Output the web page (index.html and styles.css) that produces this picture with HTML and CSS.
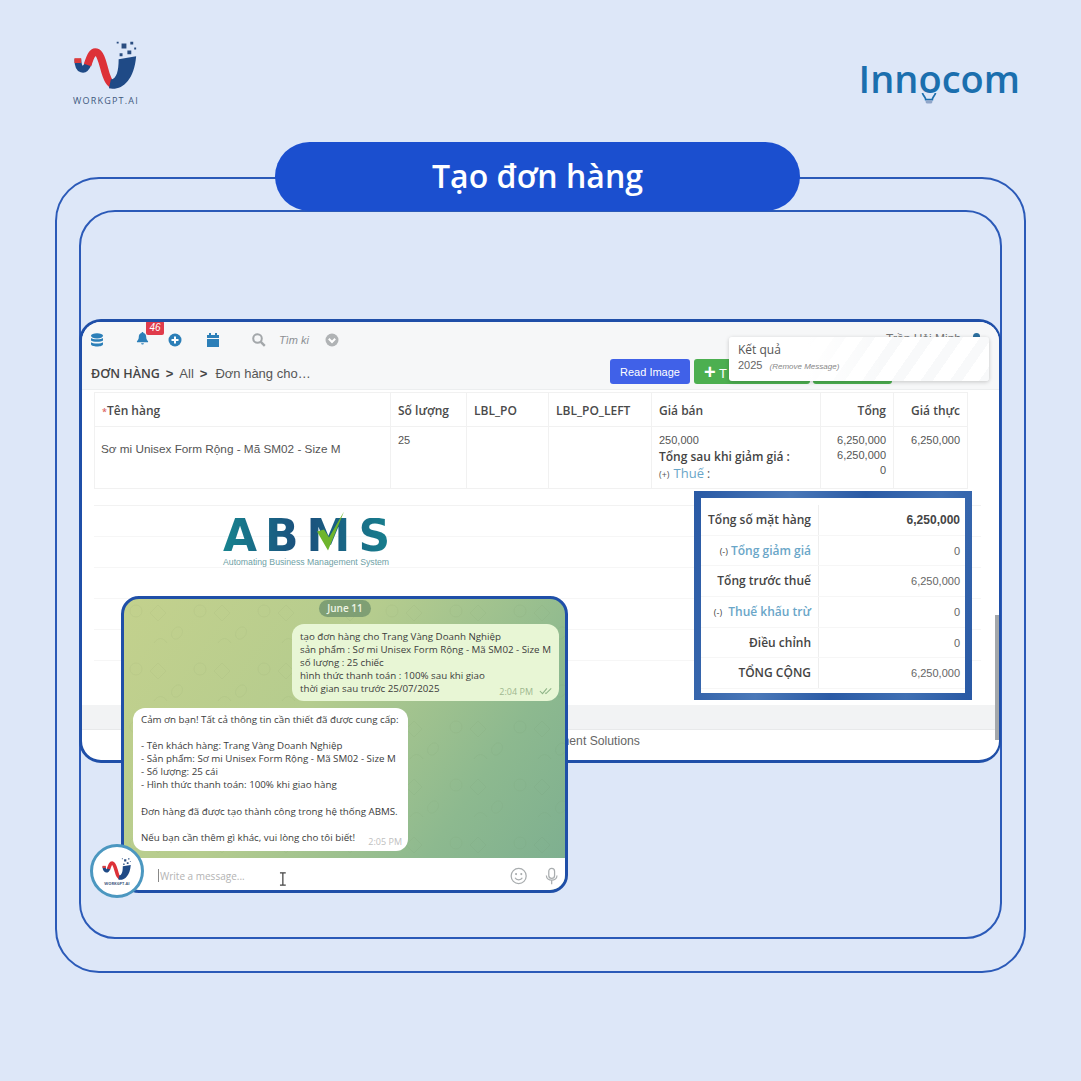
FILE: index.html
```html
<!DOCTYPE html>
<html lang="vi">
<head>
    <meta charset="UTF-8">
    <meta name="viewport" content="width=device-width, initial-scale=1.0">
    <title>Tạo đơn hàng</title>
    <link rel="stylesheet" href="styles.css">
</head>
<body>
    <div class="poster">
        <header class="top">
            <div class="workgpt">
                <svg class="workgpt-mark" viewBox="70 35 72 56">
                    <use href="#wave"></use>
                </svg>
                <span class="workgpt-name">WORKGPT.AI</span>
            </div>
            <div class="innocom">
                <span class="innocom-name">Innocom</span>
                <svg class="innocom-bulb" viewBox="0 0 16 10">
                    <path d="M2 0c1 3 3 4 3 6h6c0-2 2-3 3-6" fill="none" stroke="#1b6fae" stroke-width="1.6"/>
                    <rect x="5" y="6.5" width="6" height="3" rx="1" fill="#8fa6c9"/>
                </svg>
            </div>
        </header>

        <h1 class="pill">Tạo đơn hàng</h1>

        <div class="frame-outer">
            <div class="frame-inner">
                <section class="app">
                    <div class="toolbar">
                        <div class="tool-row">
                            <svg class="ico ico-db" viewBox="0 0 14 14"><ellipse cx="7" cy="2.8" rx="6" ry="2.6"/><path d="M1 5c1.500 1.800 10.500 1.800 12 0v2.400c-1.500 1.800-10.500 1.800-12 0zM1 9.200c1.500 1.800 10.500 1.800 12 0v2c0 3-12 3-12 0z"/></svg>
                            <span class="bell-wrap">
                                <svg class="ico ico-bell" viewBox="0 0 14 14"><path d="M7 0c.7 0 1 .5 1 1 2.300.5 3 2.500 3 4.500 0 2.500 1 3.500 2 4.500v1H1v-1c1-1 2-2 2-4.500C3 3.500 3.700 1.500 6 1c0-.5.300-1 1-1zM5.500 12h3a1.500 1.500 0 0 1-3 0z"/></svg>
                                <span class="badge">46</span>
                            </span>
                            <svg class="ico ico-plus" viewBox="0 0 14 14"><circle cx="7" cy="7" r="6.500"/><path d="M3.500 6h7v2h-7zM6 3.500h2v7H6z" fill="#fff"/></svg>
                            <svg class="ico ico-cal" viewBox="0 0 14 14"><path d="M3 0h2v2h4V0h2v2h2v3H1V2h2zM1 6h12v8H1z"/></svg>
                            <svg class="ico-search" viewBox="0 0 14 14"><circle cx="5.500" cy="5.500" r="4.300" fill="none" stroke="#a3a7aa" stroke-width="2"/><path d="M8.800 8.800l4 4" stroke="#a3a7aa" stroke-width="2.400"/></svg>
                            <span class="search-text">Tìm ki</span>
                            <svg class="ico-chev" viewBox="0 0 14 14"><circle cx="7" cy="7" r="6.500" fill="#b0b3b5"/><path d="M3.800 5.800L7 9l3.200-3.200" fill="none" stroke="#fff" stroke-width="2"/></svg>
                            <span class="user-name">Trần Hải Minh</span>
                            <span class="user-dot"></span>
                        </div>
                        <div class="tool-row crumb-row">
                            <nav class="crumbs">
                                <span class="crumb-main">ĐƠN HÀNG</span>
                                <span class="crumb-sep">&gt;</span>
                                <span>All</span>
                                <span class="crumb-sep">&gt;</span>
                                <span class="crumb-last">Đơn hàng cho…</span>
                            </nav>
                            <div class="actions">
                                <button class="btn btn-read">Read Image</button>
                                <button class="btn btn-green btn-new"><b>+</b> T</button>
                                <button class="btn btn-green btn-save"></button>
                            </div>
                        </div>
                    </div>

                    <div class="app-body">
                        <table class="items">
                            <thead>
                                <tr>
                                    <th class="col-name"><i>*</i>Tên hàng</th>
                                    <th class="col-qty">Số lượng</th>
                                    <th class="col-po">LBL_PO</th>
                                    <th class="col-left">LBL_PO_LEFT</th>
                                    <th class="col-price">Giá bán</th>
                                    <th class="col-sum num">Tổng</th>
                                    <th class="col-real num">Giá thực</th>
                                </tr>
                            </thead>
                            <tbody>
                                <tr>
                                    <td class="item-name">Sơ mi Unisex Form Rộng - Mã SM02 - Size M</td>
                                    <td>25</td>
                                    <td></td>
                                    <td></td>
                                    <td>250,000
                                        <div class="after-disc">Tổng sau khi giảm giá :</div>
                                        <div class="tax-line"><small>(+)</small> <a>Thuế</a> :</div>
                                    </td>
                                    <td class="num">6,250,000<br>6,250,000<br>0</td>
                                    <td class="num">6,250,000</td>
                                </tr>
                            </tbody>
                        </table>

                        <div class="summary">
                            <div class="abms">
                                <span class="abms-name">ABMS</span>
                                <svg class="abms-check" viewBox="0 0 30 40"><path d="M1 20l7-2 5 8L28 0 12 39z" fill="#6fb52c"/></svg>
                                <span class="abms-sub">Automating Business Management System</span>
                            </div>
                            <div class="totals">
                                <div class="total-row"><span class="total-label">Tổng số mặt hàng</span><span class="total-val strong">6,250,000</span></div>
                                <div class="total-row"><span class="total-label"><small>(-)</small> <a>Tổng giảm giá</a></span><span class="total-val">0</span></div>
                                <div class="total-row"><span class="total-label">Tổng trước thuế</span><span class="total-val">6,250,000</span></div>
                                <div class="total-row"><span class="total-label"><small>(-)</small> &nbsp;<a>Thuế khấu trừ</a></span><span class="total-val">0</span></div>
                                <div class="total-row"><span class="total-label">Điều chỉnh</span><span class="total-val">0</span></div>
                                <div class="total-row"><span class="total-label">TỔNG CỘNG</span><span class="total-val">6,250,000</span></div>
                            </div>
                        </div>
                    </div>

                    <div class="band"></div>
                    <footer class="app-foot">Innocom Management Solutions</footer>
                    <div class="scrollbar"></div>

                    <div class="toast">
                        <div class="toast-title">Kết quả</div>
                        <div class="toast-line">2025 <em>(Remove Message)</em></div>
                    </div>
                </section>

                <section class="chat">
                    <div class="chat-feed">
                        <svg class="doodles" width="100%" height="100%">
                            <defs>
                                <pattern id="doodle" width="64" height="58" patternUnits="userSpaceOnUse">
                                    <circle cx="12" cy="12" r="6"/>
                                    <path d="M34 6l8 8-8 8-8-8z"/>
                                    <path d="M50 30c6-6 12 2 6 8s-12-2-6-8z"/>
                                    <rect x="8" y="36" width="13" height="9" rx="2"/>
                                    <path d="M30 44c4-6 9-6 13 0"/>
                                </pattern>
                            </defs>
                            <rect width="100%" height="100%" fill="url(#doodle)"/>
                        </svg>
                        <div class="chat-date">June 11</div>
                        <div class="bubble bubble-out">
                            <div>tạo đơn hàng cho Trang Vàng Doanh Nghiệp</div>
                            <div>sản phẩm : Sơ mi Unisex Form Rộng - Mã SM02 - Size M</div>
                            <div>số lượng : 25 chiếc</div>
                            <div>hình thức thanh toán : 100% sau khi giao</div>
                            <div>thời gian sau trước 25/07/2025</div>
                            <span class="stamp">2:04 PM
                                <svg class="ticks" viewBox="0 0 16 8"><path d="M1 4l3 3 5-6M7 6l1 1 6-6" fill="none" stroke="#8fb487" stroke-width="1.200"/></svg>
                            </span>
                        </div>
                        <div class="bubble bubble-in">
                            <div>Cảm ơn bạn! Tất cả thông tin cần thiết đã được cung cấp:</div>
                            <div class="gap"></div>
                            <div>- Tên khách hàng: Trang Vàng Doanh Nghiệp</div>
                            <div>- Sản phẩm: Sơ mi Unisex Form Rộng - Mã SM02 - Size M</div>
                            <div>- Số lượng: 25 cái</div>
                            <div>- Hình thức thanh toán: 100% khi giao hàng</div>
                            <div class="gap"></div>
                            <div>Đơn hàng đã được tạo thành công trong hệ thống ABMS.</div>
                            <div class="gap"></div>
                            <div>Nếu bạn cần thêm gì khác, vui lòng cho tôi biết!</div>
                            <span class="stamp stamp-in">2:05 PM</span>
                        </div>
                    </div>
                    <div class="chat-input">
                        <span class="caret"></span>
                        <span class="placeholder">Write a message...</span>
                        <svg class="ibeam" viewBox="0 0 8 14"><path d="M1 .7h6M1 13.300h6M4 1v12" fill="none" stroke="#444" stroke-width="1.300"/></svg>
                        <svg class="chat-ico" viewBox="0 0 18 18"><circle cx="9" cy="9" r="7.800" fill="none" stroke="#a9adaf" stroke-width="1.300"/><circle cx="6.300" cy="7" r="1.100" fill="#a9adaf"/><circle cx="11.700" cy="7" r="1.100" fill="#a9adaf"/><path d="M5.200 10.800c1.500 2.800 6.100 2.800 7.600 0" fill="none" stroke="#a9adaf" stroke-width="1.300"/></svg>
                        <svg class="chat-ico" viewBox="0 0 18 18"><rect x="6" y="1" width="6" height="10.500" rx="3" fill="none" stroke="#a9adaf" stroke-width="1.300"/><path d="M3.500 8.500c0 6.500 11 6.500 11 0M9 14v3.500" fill="none" stroke="#a9adaf" stroke-width="1.300"/></svg>
                    </div>
                </section>

                <div class="avatar">
                    <svg class="avatar-mark" viewBox="70 35 72 56"><use href="#wave"></use></svg>
                    <span class="avatar-name">WORKGPT.AI</span>
                </div>
            </div>
        </div>
    </div>

    <svg class="defs" width="0" height="0">
        <defs>
            <g id="wave">
                <path d="M77 58c0 12 7 14 11 4" fill="none" stroke="#1f4a86" stroke-width="7"/>
                <path d="M77 62v-5" fill="none" stroke="#dd3b3b" stroke-width="7"/>
                <path d="M87 64c3-9 5-14 9-13 4 1 6 9 8 16 2 8 5 17 9 17" fill="none" stroke="#dd3138" stroke-width="8"/>
                <path d="M109 88c12 3 26-7 28-33l-18 3c0 12-2 20-8 21z" fill="#1f4a86"/>
                <path d="M122 42h5v5h-5zM131 40h3v3h-3zM120 52h3v3h-3zM128 49h4v4h-4zM135 46h2v2h-2zM117 40h2v2h-2z" fill="#2a4d80"/>
            </g>
        </defs>
    </svg>
</body>
</html>
```

FILE: styles.css
```css
* {
    box-sizing: border-box;
}
body {
    margin: 0;
    background-color: #dde7f8;
    font-family: "Open Sans", sans-serif;
}
.defs {
    position: absolute;
}
.poster {
    position: relative;
    width: 1081px;
    height: 1081px;
    overflow: hidden;
}

/* logos */
.top {
    display: flex;
    justify-content: space-between;
    height: 177px;
    padding: 36px 61px 0 71px;
}
.workgpt {
    display: flex;
    flex-direction: column;
    align-items: center;
    width: 70px;
}
.workgpt-mark {
    width: 70px;
    height: 56px;
}
.workgpt-name {
    margin-top: 2px;
    font-size: 9px;
    letter-spacing: 1.200px;
    color: #41597e;
    white-space: nowrap;
}
.innocom {
    position: relative;
    height: 60px;
    margin-top: 16px;
}
.innocom-name {
    font-family: "Open Sans", sans-serif;
    font-size: 38px;
    font-weight: 600;
    line-height: 52px;
    color: #1b6fae;
}
.innocom-bulb {
    position: absolute;
    left: 61px;
    top: 41px;
    width: 18px;
    height: 11px;
}

/* title */
.pill {
    position: absolute;
    left: 275px;
    top: 142px;
    z-index: 2;
    width: 525px;
    height: 69px;
    margin: 0;
    border-radius: 35px;
    background-color: #1b4fcf;
    color: #fff;
    font-family: "Open Sans", sans-serif;
    font-size: 32px;
    font-weight: 600;
    line-height: 67px;
    text-align: center;
}

/* frames */
.frame-outer {
    height: 796px;
    margin: 0 55px;
    padding: 31px 22px;
    border: 2px solid #2b5ab8;
    border-radius: 44px;
}
.frame-inner {
    position: relative;
    height: 729px;
    padding-top: 107px;
    border: 2px solid #2b5ab8;
    border-radius: 36px;
}

/* app window */
.app {
    position: relative;
    height: 444px;
    margin: 0 -1px 0 -2px;
    overflow: hidden;
    border: 3px solid #1f4fa8;
    border-right-width: 2px;
    border-radius: 22px;
    background-color: #fff;
    font-family: "Liberation Sans", Arial, sans-serif;
    color: #555;
}
.toolbar {
    height: 68px;
    padding: 0 10px;
    background-color: #f6f7f8;
    border-bottom: 1px solid #eceeef;
}
.tool-row {
    display: flex;
    align-items: center;
    height: 36px;
}
.crumb-row {
    height: 32px;
}
.ico {
    width: 14px;
    height: 14px;
    fill: #2c7fb8;
}
.ico-db {
    margin-left: -2px;
}
.bell-wrap {
    position: relative;
    display: flex;
    margin-left: 32px;
}
.ico-bell {
    width: 13px;
    height: 13px;
    margin-top: -3px;
}
.badge {
    position: absolute;
    left: 10px;
    top: -14px;
    width: 18px;
    height: 14px;
    border-radius: 2px;
    background-color: #e03b4b;
    color: #fff;
    font-size: 10px;
    font-style: italic;
    line-height: 13px;
    text-align: center;
}
.ico-plus {
    margin-left: 19px;
}
.ico-cal {
    margin-left: 24px;
}
.ico-search {
    width: 14px;
    height: 14px;
    margin-left: 32px;
}
.search-text {
    width: 31px;
    margin-left: 13px;
    overflow: hidden;
    font-size: 11px;
    font-style: italic;
    color: #8c9094;
}
.ico-chev {
    width: 14px;
    height: 14px;
    margin-left: 15px;
}
.user-name {
    margin: -2px 0 0 auto;
    font-size: 12px;
    color: #777;
}
.user-dot {
    width: 7px;
    height: 7px;
    margin: -8px 9px 0 12px;
    border-radius: 50%;
    background-color: #2c6f9f;
}
.crumbs {
    display: flex;
    align-items: center;
    gap: 6px;
    margin: -2px 0 0 -1px;
    font-size: 13px;
    color: #555;
}
.crumb-main {
    font-family: "Open Sans", sans-serif;
    font-size: 12.500px;
    font-weight: 600;
    color: #444;
}
.crumb-sep {
    font-weight: 700;
    color: #444;
}
.crumb-last {
    margin-left: 2px;
}
.actions {
    display: flex;
    gap: 4px;
    margin: -5px 0 0 auto;
    padding-right: 97px;
}
.btn {
    height: 25px;
    padding: 0;
    border: 0;
    border-radius: 3px;
    color: #fff;
    font-family: "Liberation Sans", Arial, sans-serif;
    font-size: 11px;
}
.btn-read {
    width: 80px;
    background-color: #4061e8;
}
.btn-green {
    background-color: #4caf50;
}
.btn-new {
    width: 116px;
    padding-left: 10px;
    font-size: 13px;
    text-align: left;
}
.btn-new b {
    font-size: 20px;
    line-height: 20px;
    vertical-align: -1px;
}
.btn-save {
    width: 79px;
    margin-left: -1px;
}

.app-body {
    height: 315px;
    padding: 2px 0 0 12px;
}
.items {
    width: 873px;
    border-collapse: collapse;
    table-layout: fixed;
    font-size: 11px;
}
.items th,
.items td {
    border: 1px solid #f1f1f1;
    padding: 0 7px;
}
.items th {
    height: 34px;
    padding-top: 1px;
    font-family: "Open Sans", sans-serif;
    font-size: 12px;
    font-weight: 600;
    color: #4a4a4a;
    text-align: left;
}
.items td {
    height: 62px;
    padding-top: 6px;
    vertical-align: top;
    line-height: 15px;
}
.items th i {
    color: #d66;
    font-size: 9px;
    font-style: normal;
}
.items th.num,
.items td.num {
    text-align: right;
}
.col-name { width: 296px; }
.col-qty { width: 76px; }
.col-po { width: 82px; }
.col-left { width: 103px; }
.col-price { width: 169px; }
.col-sum { width: 73px; }
.col-real { width: 74px; }
.items td.item-name {
    padding: 14px 0 0 6px;
    font-size: 11.750px;
}
.after-disc {
    font-family: "Open Sans", sans-serif;
    font-size: 12px;
    font-weight: 600;
    line-height: 17px;
    color: #444;
}
.tax-line {
    font-family: "Open Sans", sans-serif;
    font-size: 12px;
    line-height: 17px;
}
.tax-line small {
    font-size: 9px;
}
.tax-line a {
    margin-left: 1px;
    font-size: 13px;
}
a {
    color: #6aa6c8;
}

/* lower block with the blue box over it */
.summary {
    position: relative;
    width: 887px;
    height: 200px;
    margin-top: 16px;
    border-top: 1px solid #f2f2f2;
    background: repeating-linear-gradient(to bottom, #fff 0, #fff 30px, #f6f6f6 30px, #f6f6f6 31px) no-repeat 0 0 / 100% 183px;
}
.abms {
    position: absolute;
    left: 129px;
    top: 0;
    width: 170px;
}
.abms-name {
    position: absolute;
    left: 0;
    top: 12px;
    font-family: "DejaVu Sans", sans-serif;
    font-size: 44px;
    font-weight: 700;
    letter-spacing: 8px;
    line-height: 36px;
    background: linear-gradient(to right, #17838f, #1b4e7c 45%, #17838f);
    -webkit-background-clip: text;
    background-clip: text;
    color: transparent;
}
.abms-check {
    position: absolute;
    left: 93px;
    top: 5px;
    width: 30px;
    height: 41px;
}
.abms-sub {
    position: absolute;
    left: 0;
    top: 51px;
    font-size: 8.700px;
    line-height: 11px;
    white-space: nowrap;
    color: #6f9fa6;
}
.totals {
    position: absolute;
    left: 600px;
    top: -15px;
    width: 278px;
    height: 209px;
    padding: 7px 0;
    border: 7px solid #2f5ea8;
    border-image: linear-gradient(100deg, #2a5aa5, #4a78b8 30%, #2a5aa5 55%, #3f6fb3 80%, #2a5aa5) 1;
    background-color: #fff;
}
.total-row {
    display: flex;
    align-items: center;
    height: 30.700px;
    border-bottom: 1px solid #f6f6f6;
}
.total-label {
    width: 118px;
    height: 100%;
    padding-right: 7px;
    border-right: 1px solid #eee;
    font-family: "Open Sans", sans-serif;
    font-size: 12px;
    font-weight: 600;
    line-height: 30px;
    text-align: right;
    white-space: nowrap;
    color: #444;
}
.total-label small {
    font-size: 9px;
    font-weight: 400;
}
.total-val {
    flex: 1;
    padding-right: 5px;
    font-size: 11px;
    text-align: right;
    color: #666;
}
.total-val.strong {
    font-size: 12px;
    font-weight: 700;
    color: #444;
}
.band {
    height: 25px;
    background-color: #f2f3f4;
    border-bottom: 1px solid #e8e9ea;
}
.app-foot {
    padding: 4px 0 0 383px;
    font-size: 12.200px;
    color: #666;
}
.scrollbar {
    position: absolute;
    right: 0;
    top: 293px;
    width: 4px;
    height: 125px;
    background-color: #a3a7ab;
}
.toast {
    position: absolute;
    right: 10px;
    top: 15px;
    width: 260px;
    height: 44px;
    padding: 4px 9px;
    border-radius: 3px;
    background:
        linear-gradient(to right, #fff 30%, rgba(255, 255, 255, 0) 60%),
        repeating-linear-gradient(125deg, #fff 0, #fff 14px, #f8f9fa 14px, #f8f9fa 24px);
    box-shadow: 0 1px 4px rgba(0, 0, 0, .2);
}
.toast-title {
    font-family: "Open Sans", sans-serif;
    font-size: 12px;
    line-height: 18px;
    color: #555;
}
.toast-line {
    font-size: 11px;
    line-height: 13px;
    color: #666;
}
.toast-line em {
    margin-left: 4px;
    font-size: 8px;
    color: #888;
}

/* chat window */
.chat {
    position: absolute;
    left: 40px;
    top: 384px;
    display: flex;
    flex-direction: column;
    width: 447px;
    height: 297px;
    overflow: hidden;
    border: 3px solid #1f4fa8;
    border-radius: 18px;
    background: linear-gradient(125deg, #c3d18d 0%, #b5cc8e 40%, #8db98f 75%, #7cae90 100%);
    font-size: 9.750px;
    color: #3c3c3c;
}
.chat-feed {
    position: relative;
    flex: 1;
}
.doodles {
    position: absolute;
    left: 0;
    top: 0;
    fill: none;
    stroke: #5d7a4a;
    stroke-width: 1;
    opacity: .05;
}
.doodles rect {
    stroke: none;
}
.chat-date {
    position: absolute;
    left: 195px;
    top: 1px;
    width: 52px;
    height: 17px;
    border-radius: 9px;
    background-color: #7f9f74;
    color: #eef4e4;
    font-size: 10px;
    font-weight: 600;
    line-height: 17px;
    text-align: center;
}
.bubble {
    position: absolute;
    border-radius: 12px;
    line-height: 13.100px;
    white-space: nowrap;
}
.bubble-out {
    left: 168px;
    top: 25px;
    width: 267px;
    height: 77px;
    padding: 6px 8px;
    background-color: #e8f6d5;
}
.bubble-in {
    left: 9px;
    top: 109px;
    width: 275px;
    height: 143px;
    padding: 5px 8px;
    background-color: #fff;
}
.gap {
    height: 13.100px;
}
.stamp {
    position: absolute;
    right: 6px;
    bottom: 3px;
    display: flex;
    align-items: center;
    gap: 6px;
    font-size: 9px;
    color: #9fb88f;
}
.stamp-in {
    color: #c0c0c0;
}
.ticks {
    width: 14px;
    height: 8px;
}
.chat-input {
    display: flex;
    align-items: center;
    height: 32px;
    padding: 3px 5px 0 34px;
    background-color: #fff;
}
.caret {
    width: 1px;
    height: 13px;
    background-color: #888;
}
.placeholder {
    width: 123px;
    margin-left: 1px;
    font-size: 10px;
    color: #b3b3b3;
}
.ibeam {
    width: 8px;
    height: 14px;
    margin-top: 6px;
}
.chat-ico {
    width: 18px;
    height: 18px;
    margin-left: 15px;
}
.ibeam + .chat-ico {
    margin-left: 224px;
}

.avatar {
    position: absolute;
    left: 9px;
    top: 632px;
    display: flex;
    flex-direction: column;
    align-items: center;
    justify-content: center;
    width: 54px;
    height: 54px;
    border: 3px solid #4b97c0;
    border-radius: 50%;
    background-color: #fff;
}
.avatar-mark {
    width: 32px;
    height: 25px;
}
.avatar-name {
    font-size: 4px;
    font-weight: 700;
    color: #41597e;
}
```
